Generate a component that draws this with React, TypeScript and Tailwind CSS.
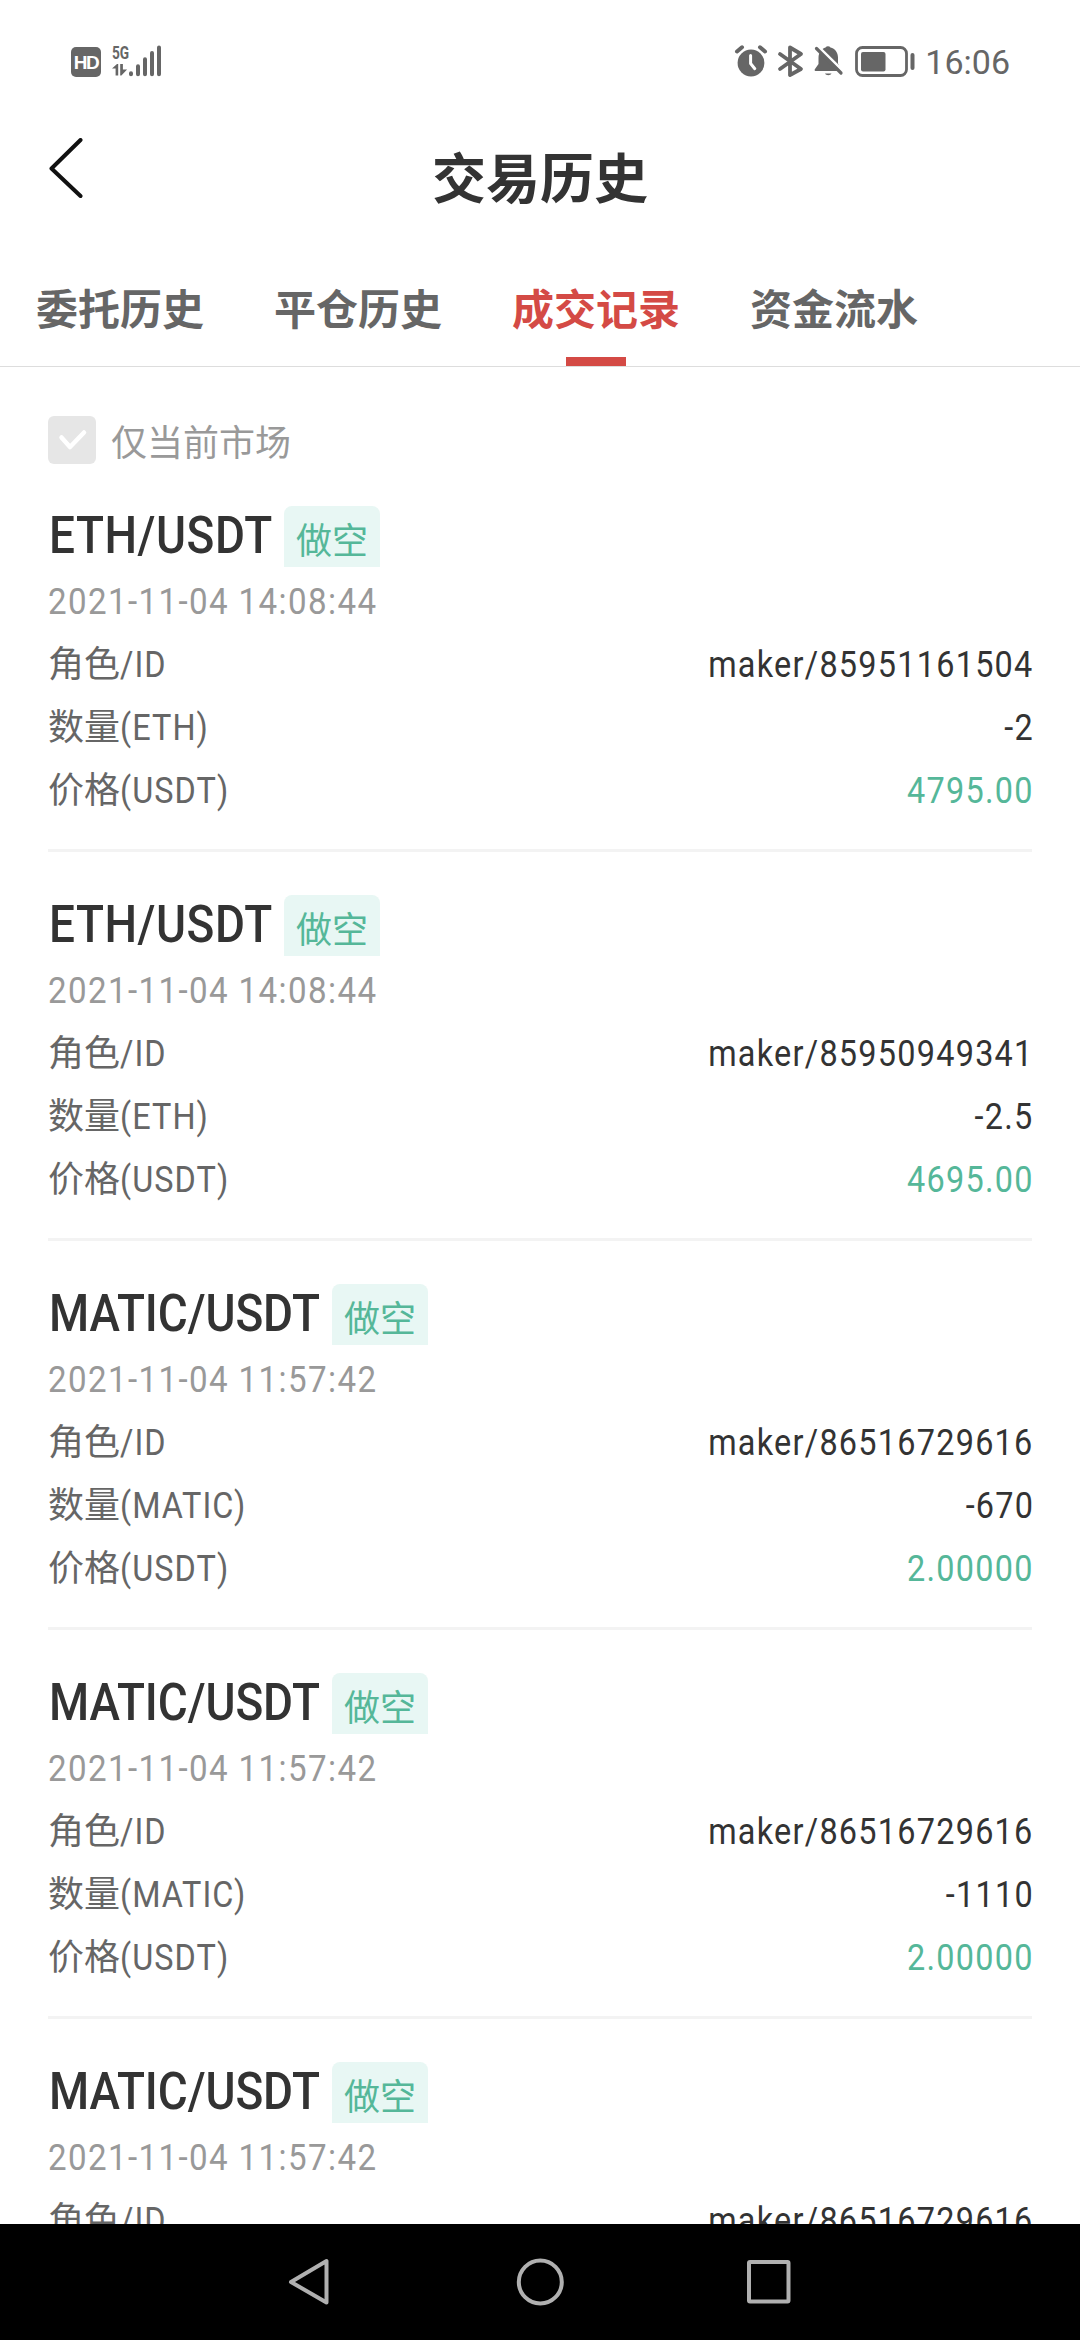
type Trade = { pair: string; coin: string; time: string; id: string; qty: string; price: string };

const trades: Trade[] = [
  { pair: 'ETH/USDT', coin: 'ETH', time: '2021-11-04 14:08:44', id: '85951161504', qty: '-2', price: '4795.00' },
  { pair: 'ETH/USDT', coin: 'ETH', time: '2021-11-04 14:08:44', id: '85950949341', qty: '-2.5', price: '4695.00' },
  { pair: 'MATIC/USDT', coin: 'MATIC', time: '2021-11-04 11:57:42', id: '86516729616', qty: '-670', price: '2.00000' },
  { pair: 'MATIC/USDT', coin: 'MATIC', time: '2021-11-04 11:57:42', id: '86516729616', qty: '-1110', price: '2.00000' },
  { pair: 'MATIC/USDT', coin: 'MATIC', time: '2021-11-04 11:57:42', id: '86516729616', qty: '-670', price: '2.00000' },
];

const tabs = ['委托历史', '平仓历史', '成交记录', '资金流水'];

function StatusBar() {
  return (
    <div className="flex h-[123px] shrink-0 items-start justify-between pr-[70px] pl-[71px] text-[#666]">
      <div className="flex pt-[45px]">
        <div className="mt-[2px] flex size-[30px] items-center justify-center rounded-[5px] bg-[#666] font-['Liberation_Sans'] text-[19px] leading-none font-bold tracking-[-1.5px] text-white">
          HD
        </div>
        <div className="ml-[11px] flex h-[32px] w-[18px] flex-col">
          <span className="h-[18px] origin-left scale-x-[.72] font-[Roboto] text-[19px] leading-[15px] font-bold">5G</span>
          <svg className="h-[13px] w-[18px]" viewBox="0 0 18 13" fill="currentColor">
            <path d="M6.2 12.5H3.6V5.6H0L5 1h1.2zM8.2 1h2.7v5.6h4.2L9.4 12.5H8.2z" />
          </svg>
        </div>
        <svg className="-ml-[2px] h-[32px] w-[34px]" viewBox="0 0 34 32" stroke="currentColor" strokeWidth="4" strokeLinecap="round">
          <path d="M3 28.3v1M10 21.3v8M17 14.3v15M24 8v21.3M31 2.5v26.8" />
        </svg>
      </div>
      <div className="flex pt-[44px]">
        <svg className="h-[34px] w-[34px]" viewBox="0 0 34 34">
          <circle cx="17" cy="19" r="13.4" fill="currentColor" />
          <path d="M3 7.5l5-4.2M31 7.5l-5-4.2" stroke="currentColor" strokeWidth="4" strokeLinecap="round" />
          <path d="M16.6 11.5v8l4.2 5.2" fill="none" stroke="#fff" strokeWidth="3" strokeLinecap="round" strokeLinejoin="round" />
        </svg>
        <svg className="ml-[9px] h-[34px] w-[28px]" viewBox="0 0 28 34" fill="none" stroke="currentColor" strokeWidth="3.8" strokeLinecap="round" strokeLinejoin="round">
          <path d="M3 10l21 15L13 31V3.500l11 6.500L3 25" />
        </svg>
        <svg className="ml-[9px] h-[34px] w-[30px]" viewBox="0 0 30 34" fill="currentColor">
          <path d="M4.5 14c0-6 3.500-9.700 7-10.500a3 3 0 0 1 5 0c4.500 1 7.500 5 7.500 10v6l2.500 5.500c.5 1.300 0 2-1 2H2c-1.300 0-1.800-.8-1-2l3.500-5zM11 29.500h6.500c-1 2.300-5.500 2.300-6.500 0z" />
          <path d="M4 2.500L30 28" stroke="#fff" strokeWidth="3" />
          <path d="M2.500 4.500L27 29" stroke="currentColor" strokeWidth="3.200" strokeLinecap="round" />
        </svg>
        <svg className="ml-[10px] h-[34px] w-[62px]" viewBox="0 0 62 34">
          <rect x="2.500" y="3.500" width="50" height="28" rx="6" fill="none" stroke="currentColor" strokeWidth="2.800" />
          <rect x="7" y="8" width="24.500" height="19.500" rx="2" fill="currentColor" />
          <path d="M58.500 11v13" stroke="currentColor" strokeWidth="4" strokeLinecap="round" />
        </svg>
        <span className="ml-[9px] font-[Roboto] text-[34px] leading-[36px]">16:06</span>
      </div>
    </div>
  );
}

function Row({ label, value, green }: { label: string; value: string; green?: boolean }) {
  const split = label.search(/[/(]/);
  return (
    <div className="flex h-[63px] items-center justify-between">
      <span className="flex items-center text-[#666]">
        {label.slice(0, split)}
        <span className="inline-block origin-left scale-x-[.9] tracking-[1.2px]">{label.slice(split)}</span>
      </span>
      <span
        className={
          green
            ? 'inline-block origin-right translate-x-[2px] scale-x-[.9] tracking-[1.4px] text-[#55b799]'
            : 'inline-block origin-right translate-x-[2px] scale-x-[.9] tracking-[1.4px] text-[#333]'
        }
      >
        {value}
      </span>
    </div>
  );
}

function TradeCard({ t }: { t: Trade }) {
  const eth = t.coin === 'ETH';
  return (
    <div className="h-[389px] shrink-0 border-b-[3px] border-[#f3f3f3] pt-[43px]">
      <div className="flex h-[61px] text-[#55b799]">
        <div className={eth ? 'w-[236px]' : 'w-[284px]'}>
          <span
            className={
              eth
                ? 'ml-px inline-block origin-left scale-x-[.9] text-[51px] leading-[59px] font-medium tracking-[0.6px] whitespace-nowrap text-[#333]'
                : 'ml-px inline-block origin-left scale-x-[.9] text-[51px] leading-[59px] font-medium tracking-[-0.1px] whitespace-nowrap text-[#333]'
            }
          >
            {t.pair}
          </span>
        </div>
        <div className="flex w-[96px] items-center justify-center rounded-t-[8px] bg-[#e8f7f4] pt-[10px]">做空</div>
      </div>
      <div className="flex h-[65px] items-center pt-[4px]">
        <span className="inline-block origin-left scale-x-[.92] tracking-[1.5px] whitespace-nowrap text-[#999]">{t.time}</span>
      </div>
      <div className="pt-px">
        <Row label="角色/ID" value={`maker/${t.id}`} />
        <Row label={`数量(${t.coin})`} value={t.qty} />
        <Row label="价格(USDT)" value={t.price} green />
      </div>
    </div>
  );
}

export default function App() {
  return (
    <div className="flex h-[2340px] w-[1080px] flex-col overflow-hidden bg-white font-[Roboto,'Noto_Sans_CJK_SC',sans-serif]">
      <StatusBar />
      <header className="grid h-[110px] shrink-0 grid-cols-[1fr_auto_1fr] items-center px-[48px]">
        <svg className="-mt-[20px] h-[60px] w-[36px]" viewBox="0 0 36 60" fill="none" stroke="#111" strokeWidth="4" strokeLinecap="round" strokeLinejoin="round">
          <path d="M32.500 2L3.500 30.500L32.500 58" />
        </svg>
        <h1 className="pt-[5px] text-[54px] leading-[80px] font-bold text-[#333]">交易历史</h1>
      </header>
      <nav className="flex h-[134px] shrink-0 gap-[70px] border-b border-[#ddd] pl-[36px]">
        {tabs.map((tab, i) => (
          <div key={tab} className="flex w-[168px] flex-col items-center justify-between pt-[47px]">
            <span className={i === 2 ? 'text-[42px] leading-[62px] font-bold text-[#d44a45]' : 'text-[42px] leading-[62px] font-bold text-[#666]'}>{tab}</span>
            {i === 2 && <div className="h-[9px] w-[60px] bg-[#d44a45]" />}
          </div>
        ))}
      </nav>
      <main className="flex min-h-0 flex-1 flex-col overflow-hidden px-[48px] text-[36px] leading-[54px]">
        <div className="flex h-[96px] shrink-0 items-start pt-[49px] text-[#999]">
          <div className="flex size-[48px] items-center justify-center rounded-[6px] bg-[#e6e6e6]">
            <svg className="size-[48px]" viewBox="0 0 48 48" fill="none" stroke="#fff" strokeWidth="4.500" strokeLinecap="round" strokeLinejoin="round">
              <path d="M13.500 21.500l8.500 9.500L36 16.500" />
            </svg>
          </div>
          <span className="ml-[15px] leading-[56px]">仅当前市场</span>
        </div>
        {trades.map((t, i) => (
          <TradeCard key={i} t={t} />
        ))}
      </main>
      <div className="flex h-[116px] shrink-0 items-center bg-black pl-[287px]">
        <svg className="h-[50px] w-[506px]" viewBox="0 0 506 50" fill="none" stroke="#b0b0b0" strokeWidth="4" strokeLinejoin="round">
          <path d="M39.500 4v41.500L4 25z" />
          <circle cx="253.300" cy="25" r="21.500" />
          <rect x="462" y="5" width="39.500" height="39.500" rx="1" />
        </svg>
      </div>
    </div>
  );
}
